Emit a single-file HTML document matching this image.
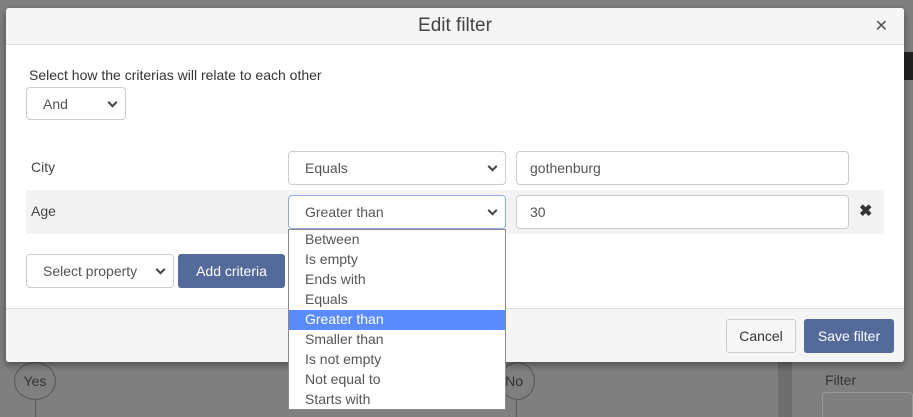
<!DOCTYPE html>
<html><head><style>
*{box-sizing:border-box;margin:0;padding:0}
html,body{width:913px;height:417px;overflow:hidden}
body{background:#7f7f7f;position:relative;font-family:"Liberation Sans",sans-serif;color:#444;font-size:14px}
.a{position:absolute}
.sel{position:absolute;background:#fff;border:1px solid #ccc;border-radius:4px;padding-left:16px;display:flex;align-items:center;color:#555;font-size:14px}
.sel:after{content:"";position:absolute;right:9px;top:50%;width:5px;height:5px;border-right:2px solid #444;border-bottom:2px solid #444;transform:translateY(-70%) rotate(45deg)}
.inp{position:absolute;background:#fff;border:1px solid #ccc;border-radius:4px;padding-left:13px;display:flex;align-items:center;color:#555}
.btn{position:absolute;border-radius:3px;display:flex;align-items:center;justify-content:center;font-size:14px}
.dd div{height:20px;line-height:19px;padding-left:16px;color:#555}
</style></head><body>
<div class="a" style="left:904px;top:52px;width:9px;height:28px;background:#222"></div>
<div class="a" style="left:778px;top:362px;width:14px;height:55px;background:#6e6e6e"></div>
<div class="a" style="left:822px;top:392px;width:91px;height:30px;border:1px solid #999;border-radius:4px"></div>
<div class="a" style="left:825px;top:372px;color:#333;font-size:14px">Filter</div>
<div class="a" style="left:14px;top:362px;width:42px;height:38px;border:1px solid #555;border-radius:50%;text-align:center;line-height:36px;color:#333;font-size:14px">Yes</div>
<div class="a" style="left:35px;top:400px;width:1px;height:17px;background:#555"></div>
<div class="a" style="left:500px;top:362px;width:35px;height:38px;border:1px solid #555;border-radius:50%;text-align:right;padding-right:11px;line-height:36px;color:#333">No</div>
<div class="a" style="left:516px;top:400px;width:1px;height:17px;background:#555"></div>

<div class="a" style="left:6px;top:8px;width:898px;height:354px;background:#fff;border-radius:3px;box-shadow:0 3px 8px rgba(0,0,0,.4);overflow:hidden">
 <div class="a" style="left:0;top:0;width:898px;height:37px;background:#f5f5f5;border-bottom:1px solid #ddd;text-align:center;line-height:36px;font-size:19px;color:#444">Edit filter</div>
 <div class="a" style="right:16px;top:8px;font-size:16px;color:#555">✕</div>
 <div class="a" style="left:0;top:300px;width:898px;height:54px;background:#f5f5f5;border-top:1px solid #ddd"></div>
</div>
<div class="a" style="left:29px;top:67px;font-size:14px;color:#333">Select how the criterias will relate to each other</div>
<div class="sel" style="left:26px;top:87px;width:100px;height:33px;padding-left:16px">And</div>
<div class="a" style="left:26px;top:190px;width:858px;height:44px;background:#f3f3f3"></div>
<div class="a" style="left:31px;top:159px;color:#444">City</div>
<div class="a" style="left:31px;top:203px;color:#444">Age</div>
<div class="sel" style="left:288px;top:151px;width:218px;height:34px">Equals</div>
<div class="inp" style="left:516px;top:151px;width:333px;height:34px">gothenburg</div>
<div class="sel" style="left:288px;top:195px;width:218px;height:34px;border-color:#8ab0e6">Greater than</div>
<div class="inp" style="left:516px;top:195px;width:333px;height:34px">30</div>
<div class="a" style="left:859px;top:201px;font-size:16px;font-weight:bold;color:#333">✖</div>
<div class="sel" style="left:26px;top:254px;width:148px;height:34px;padding-left:16px">Select property</div>
<div class="btn" style="left:178px;top:254px;width:107px;height:34px;background:#536a9a;color:#fff">Add criteria</div>
<div class="btn" style="left:726px;top:319px;width:70px;height:34px;background:#f7f7f7;border:1px solid #ccc;color:#333">Cancel</div>
<div class="btn" style="left:804px;top:319px;width:90px;height:34px;background:#536a9a;color:#fff">Save filter</div>
<div class="a dd" style="left:288px;top:229px;width:218px;height:181px;background:#fff;border:1px solid #888">
 <div>Between</div><div>Is empty</div><div>Ends with</div><div>Equals</div>
 <div style="background:#5a8cff;color:#fff">Greater than</div>
 <div>Smaller than</div><div>Is not empty</div><div>Not equal to</div><div>Starts with</div>
</div>
</body></html>
